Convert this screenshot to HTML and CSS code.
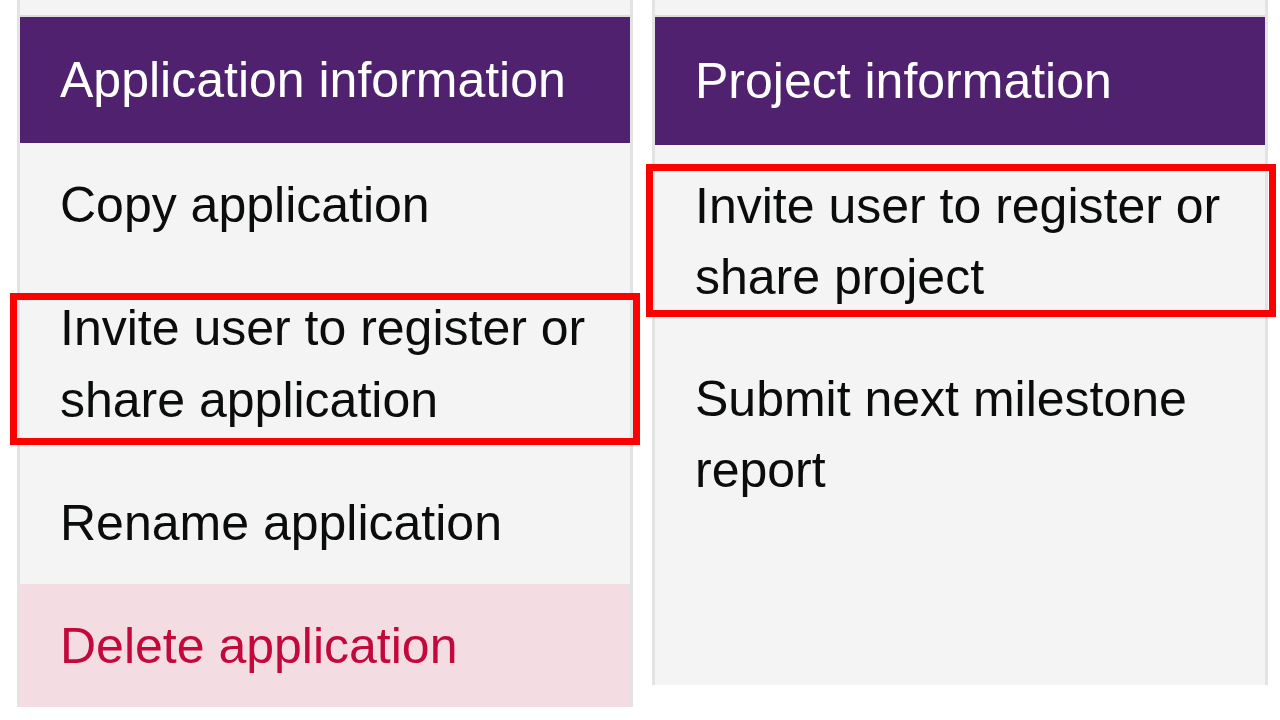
FILE: index.html
```html
<!DOCTYPE html>
<html lang="en">
<head>
<meta charset="utf-8">
<title>Application and project information</title>
<link rel="stylesheet" href="styles.css">
</head>
<body>
<div class="page">
  <section class="card">
    <div class="card-top"></div>
    <h2 class="card-title">Application information</h2>
    <ul class="menu">
      <li class="menu-item">Copy application</li>
      <li class="menu-item">Invite user to register or share application</li>
      <li class="menu-item">Rename application</li>
      <li class="menu-item menu-item--danger">Delete application</li>
    </ul>
  </section>
  <section class="card card--project">
    <div class="card-top"></div>
    <h2 class="card-title">Project information</h2>
    <ul class="menu">
      <li class="menu-item">Invite user to register or share project</li>
      <li class="menu-item">Submit next milestone report</li>
    </ul>
  </section>

  <div class="highlight highlight--left"></div>
  <div class="highlight highlight--right"></div>
</div>
</body>
</html>
```

FILE: styles.css
```css
* {
  box-sizing: border-box;
}

html, body {
  margin: 0;
  padding: 0;
  background: #ffffff;
}

body {
  font-family: "Liberation Sans", Arial, sans-serif;
  color: #0b0c0c;
}

.page {
  position: relative;
  display: flex;
  align-items: flex-start;
  gap: 19px;
  padding-left: 17px;
  width: 1280px;
  height: 720px;
  overflow: hidden;
}

.card {
  width: 616px;
  background: #f4f4f4;
  border-left: 3px solid #e3e3e3;
  border-right: 3px solid #e3e3e3;
  display: flex;
  flex-direction: column;
}

.card-top {
  height: 17px;
  background: #f4f4f4;
  border-bottom: 2px solid #dcdcdc;
}

.card-title {
  margin: 0;
  height: 126px;
  padding: 0 40px;
  background: #50216f;
  color: #ffffff;
  font-size: 50px;
  font-weight: normal;
  line-height: 126px;
  white-space: nowrap;
}

.card--project .card-title {
  height: 128px;
  line-height: 128px;
}

.menu {
  list-style: none;
  margin: 0;
  padding: 0;
  font-size: 50px;
  line-height: 72px;
}

.card--project .menu {
  line-height: 71px;
  min-height: 540px;
}

.menu-item {
  padding: 25.5px 40px;
}

.menu-item--danger {
  background: #f3dce2;
  color: #c3093c;
}

.highlight {
  position: absolute;
  border: 7px solid #ff0000;
  pointer-events: none;
}

.highlight--left {
  left: 10px;
  top: 293px;
  width: 630px;
  height: 152px;
}

.highlight--right {
  left: 646px;
  top: 164px;
  width: 630px;
  height: 153px;
}
```
